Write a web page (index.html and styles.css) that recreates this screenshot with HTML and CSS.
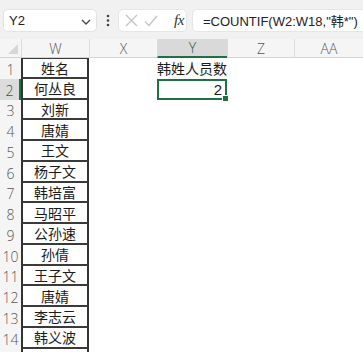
FILE: index.html
```html
<!DOCTYPE html>
<html>
<head>
<meta charset="utf-8">
<link rel="stylesheet" href="styles.css">
</head>
<body>
<div class="toolbar">
  <div class="namebox"><span>Y2</span>
    <svg class="chev" width="10" height="6" viewBox="0 0 10 6"><path d="M1 1 L5 5 L9 1" fill="none" stroke="#444" stroke-width="1.3"/></svg>
  </div>
  <div class="sep"><svg width="4" height="13" viewBox="0 0 4 13"><circle cx="2" cy="2" r="1.3" fill="#444"/><circle cx="2" cy="6.5" r="1.3" fill="#444"/><circle cx="2" cy="11" r="1.3" fill="#444"/></svg></div>
  <div class="fbtns">
    <svg width="13" height="13" viewBox="0 0 13 13"><path d="M1 1 L12 12 M12 1 L1 12" stroke="#c4c4c4" stroke-width="1.3" fill="none"/></svg>
    <svg width="14" height="12" viewBox="0 0 14 12"><path d="M1 6.5 L5 10.5 L13 1" stroke="#c4c4c4" stroke-width="1.3" fill="none"/></svg>
    <span class="fx">fx</span>
  </div>
  <div class="formula">=COUNTIF(W2:W18,"韩*")</div>
</div>
<div class="sheet">
  <div class="corner"><span class="tri"></span></div>
  <div class="ch">W</div>
  <div class="ch">X</div>
  <div class="ch sel">Y</div>
  <div class="ch">Z</div>
  <div class="ch">AA</div>

  <div class="rh">1</div><div class="c w first">姓名</div><div class="c"></div><div class="c center">韩姓人员数</div><div class="c"></div><div class="c"></div>
  <div class="rh sel">2</div><div class="c w">何丛良</div><div class="c"></div><div class="c active">2</div><div class="c"></div><div class="c"></div>
  <div class="rh">3</div><div class="c w">刘新</div><div class="c"></div><div class="c"></div><div class="c"></div><div class="c"></div>
  <div class="rh">4</div><div class="c w">唐婧</div><div class="c"></div><div class="c"></div><div class="c"></div><div class="c"></div>
  <div class="rh">5</div><div class="c w">王文</div><div class="c"></div><div class="c"></div><div class="c"></div><div class="c"></div>
  <div class="rh">6</div><div class="c w">杨子文</div><div class="c"></div><div class="c"></div><div class="c"></div><div class="c"></div>
  <div class="rh">7</div><div class="c w">韩培富</div><div class="c"></div><div class="c"></div><div class="c"></div><div class="c"></div>
  <div class="rh">8</div><div class="c w">马昭平</div><div class="c"></div><div class="c"></div><div class="c"></div><div class="c"></div>
  <div class="rh">9</div><div class="c w">公孙速</div><div class="c"></div><div class="c"></div><div class="c"></div><div class="c"></div>
  <div class="rh">10</div><div class="c w">孙倩</div><div class="c"></div><div class="c"></div><div class="c"></div><div class="c"></div>
  <div class="rh">11</div><div class="c w">王子文</div><div class="c"></div><div class="c"></div><div class="c"></div><div class="c"></div>
  <div class="rh">12</div><div class="c w">唐婧</div><div class="c"></div><div class="c"></div><div class="c"></div><div class="c"></div>
  <div class="rh">13</div><div class="c w">李志云</div><div class="c"></div><div class="c"></div><div class="c"></div><div class="c"></div>
  <div class="rh">14</div><div class="c w">韩义波</div><div class="c"></div><div class="c"></div><div class="c"></div><div class="c"></div>
  <div class="rh"></div><div class="c w"></div><div class="c"></div><div class="c"></div><div class="c"></div><div class="c"></div>
</div>
</body>
</html>
```

FILE: styles.css
```css
html, body {
  margin: 0;
  padding: 0;
  width: 363px;
  height: 352px;
  overflow: hidden;
  background: #fff;
}
body {
  font-family: "Liberation Sans", "Noto Sans CJK SC", sans-serif;
  color: #222;
}
.toolbar {
  height: 39px;
  box-sizing: border-box;
  background: #f1f1f1;
  display: flex;
  align-items: flex-start;
  padding: 9px 0 0 3px;
}
.namebox {
  width: 94px;
  height: 23px;
  box-sizing: border-box;
  background: #fff;
  border: 1px solid #e3e3e3;
  border-radius: 5px;
  display: flex;
  align-items: center;
  justify-content: space-between;
  padding: 0 5px 0 5px;
  font-size: 13px;
  color: #222;
}
.chev { margin-top: 2px; }
.sep {
  width: 21px;
  height: 23px;
  display: flex;
  align-items: center;
  justify-content: center;
}
.fbtns {
  width: 69px;
  height: 23px;
  box-sizing: border-box;
  background: #fff;
  border: 1px solid #e6e6e6;
  border-radius: 5px;
  display: flex;
  align-items: center;
  padding: 0 0 0 6px;
  gap: 6px;
}
.fx {
  font-family: "Liberation Serif", "DejaVu Serif", serif;
  font-style: italic;
  font-size: 15px;
  color: #333;
  margin-left: 10px;
  letter-spacing: -0.5px;
}
.formula {
  flex: 1;
  height: 23px;
  box-sizing: border-box;
  margin-left: 5px;
  margin-right: -10px;
  background: #fff;
  border: 1px solid #e6e6e6;
  border-radius: 5px;
  font-size: 13px;
  display: flex;
  align-items: center;
  padding-left: 10px;
  color: #222;
}
.sheet {
  display: grid;
  grid-template-columns: 21px 68px 68px 70px 67px 69px;
  grid-template-rows: 19px repeat(15, 20.75px);
}
.corner {
  background: #f5f5f5;
  border-bottom: 1px solid #d4d4d4;
  position: relative;
}
.tri {
  position: absolute;
  right: 3px;
  bottom: 3px;
  width: 0;
  height: 0;
  border-left: 10px solid transparent;
  border-bottom: 10px solid #d6d6d6;
}
.ch {
  background: #f5f5f5;
  border-bottom: 1px solid #d4d4d4;
  border-left: 1px solid #dcdcdc;
  font-family: "Open Sans", "Liberation Sans", sans-serif;
  font-weight: 300;
  font-size: 14px;
  color: #555;
  display: flex;
  align-items: center;
  justify-content: center;
  box-sizing: border-box;
}
.ch.sel {
  background: #d9d9d9;
  border-bottom: 2px solid #1f7145;
  color: #2a5e3e;
}
.rh {
  background: #f5f5f5;
  font-family: "Open Sans", "Liberation Sans", sans-serif;
  font-weight: 300;
  font-size: 14px;
  color: #555;
  display: flex;
  align-items: flex-end;
  justify-content: center;
  line-height: 18px;
  box-sizing: border-box;
}
.rh.sel {
  background: #dcdcdc;
  border-right: 2px solid #1f7145;
  color: #2a5e3e;
}
.c {
  font-family: "Noto Sans CJK SC", sans-serif;
  font-size: 14px;
  color: #1a1a1a;
  display: flex;
  align-items: center;
  box-sizing: border-box;
  position: relative;
}
.c.w {
  justify-content: center;
  border-left: 2px solid #333;
  border-right: 2px solid #333;
  border-bottom: 2px solid #3a3a3a;
}
.c.w.first {
  border-top: 1px solid #3a3a3a;
}
.c.center {
  justify-content: center;
  white-space: nowrap;
}
.c.active {
  justify-content: flex-end;
  border: 2px solid #1f7145;
  padding-right: 3px;
  font-family: "Liberation Sans", sans-serif;
  font-size: 15px;
}
.c.active::after {
  content: "";
  position: absolute;
  right: -4px;
  bottom: -4px;
  width: 5px;
  height: 5px;
  background: #1f7145;
  border: 1px solid #fff;
}
```
